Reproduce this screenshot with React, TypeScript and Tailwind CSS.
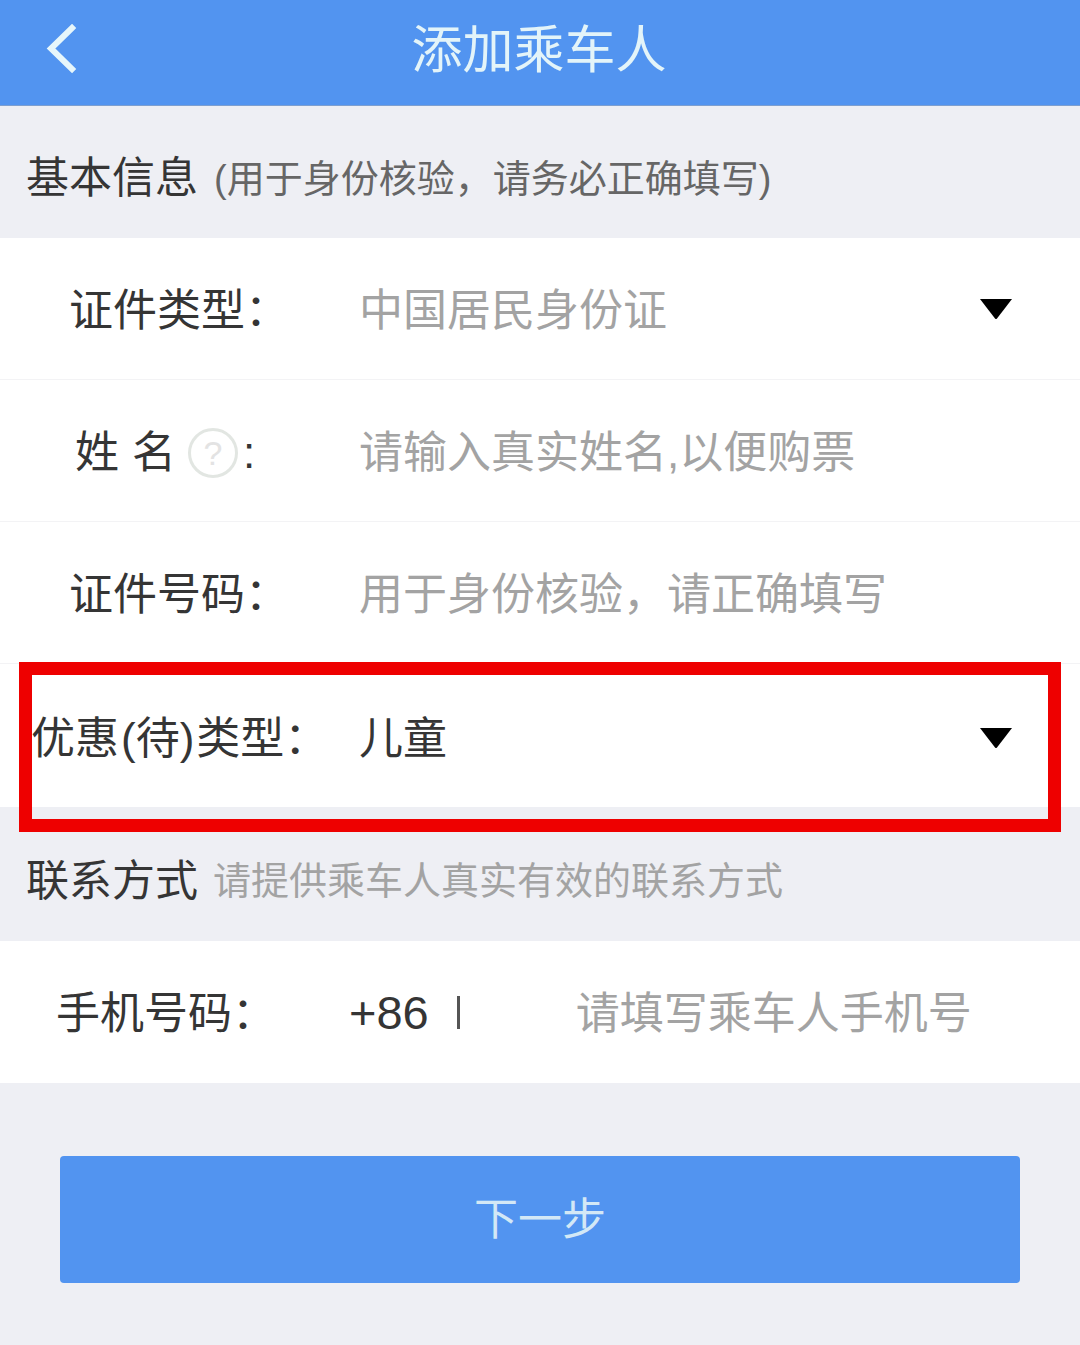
import React from "react";

const FONT = "font-['Liberation_Sans','Noto_Sans_CJK_SC',sans-serif]";

function Caret() {
  return (
    <svg width="32" height="20" viewBox="0 0 32 20" className="block">
      <path d="M0 0H32L17 19.5a1.3 1.3 0 0 1-2 0Z" fill="#000" />
    </svg>
  );
}

function Row({
  label,
  labelClass = "pl-[69px] w-[359px]",
  rowClass = "h-[142px] pt-[4px]",
  value,
  valueClass = "text-[#a3a3a3]",
  caret = false,
  caretClass = "-mt-[10px]",
  divider = true,
  children,
}: {
  label: React.ReactNode;
  labelClass?: string;
  rowClass?: string;
  value?: string;
  valueClass?: string;
  caret?: boolean;
  caretClass?: string;
  divider?: boolean;
  children?: React.ReactNode;
}) {
  return (
    <div
      className={`relative flex items-center bg-white text-[44px] leading-none ${rowClass} ${
        divider ? "border-b border-[#f3f3f5]" : ""
      }`}
    >
      <div className={`shrink-0 whitespace-nowrap text-[#353535] ${labelClass}`}>{label}</div>
      {value && <div className={`whitespace-nowrap ${valueClass}`}>{value}</div>}
      {caret && (
        <div className={`absolute right-[68px] top-1/2 ${caretClass}`}>
          <Caret />
        </div>
      )}
      {children}
    </div>
  );
}

export default function App() {
  return (
    <div className={`h-[1345px] w-[1080px] overflow-hidden bg-[#eeeff4] ${FONT}`}>
      <header className="relative flex h-[106px] items-center justify-center border-b border-[#7d9fd0] bg-[#5294f0] pb-[4px]">
        <svg
          width="34"
          height="50"
          viewBox="0 0 34 50"
          className="absolute left-[45px] top-[24px]"
          fill="none"
          stroke="#e6f6fb"
          strokeWidth="6"
          strokeLinecap="square"
        >
          <path d="M27 4 L6 24.5 L27 45" />
        </svg>
        <h1 className="-ml-[2px] text-[51px] font-normal leading-none text-[#e3f4f9]">添加乘车人</h1>
      </header>

      <section className="flex h-[132px] items-center pl-[26px] pt-[12px]">
        <span className="text-[43px] leading-none text-[#353535]">基本信息</span>
        <span className="ml-[16px] mt-[2px] text-[38px] leading-none text-[#666666]">(用于身份核验，请务必正确填写)</span>
      </section>

      <Row label="证件类型：" value="中国居民身份证" caret />
      <Row
        label={
          <span className="flex items-center">
            <span className="pl-[6px]">姓</span>
            <span className="ml-[13px]">名</span>
            <span className="ml-[12px] flex h-[50px] w-[50px] items-center justify-center rounded-full border-[3px] border-[#e2e6e2] text-[34px] text-[#e3e3e3]">
              ?
            </span>
            <span className="ml-[5px]">:</span>
          </span>
        }
        value="请输入真实姓名,以便购票"
      />
      <Row label="证件号码：" value="用于身份核验，请正确填写" />
      <Row
        label={
          <span>
            优惠<span className="mx-[2px]">(待)</span>类型：
          </span>
        }
        labelClass="pl-[31px] w-[359px]"
        rowClass="h-[143px] pt-[6px]"
        value="儿童"
        valueClass="text-[#353535]"
        caret
        caretClass="-mt-[8px]"
        divider={false}
      >
        <div className="pointer-events-none absolute left-[19px] top-[-2px] h-[170px] w-[1042px] border-[13px] border-[#ee0000]" />
      </Row>

      <section className="flex h-[134px] items-center pl-[26px] pt-[14px]">
        <span className="text-[43px] leading-none text-[#353535]">联系方式</span>
        <span className="ml-[15px] text-[38px] leading-none text-[#a3a3a3]">请提供乘车人真实有效的联系方式</span>
      </section>

      <Row label="手机号码：" labelClass="pl-[56px] w-[349px]" divider={false}>
        <span className="-mt-[4px] text-[47px] text-[#353535]">+86</span>
        <span className="-mt-[4px] ml-[28px] h-[33px] w-[3px] bg-[#555555]" />
        <span className="ml-[116px] text-[#a3a3a3]">请填写乘车人手机号</span>
      </Row>

      <div className="px-[60px] pt-[73px]">
        <button className="flex h-[127px] w-[960px] items-center justify-center rounded-[4px] bg-[#5294f0] text-[44px] text-[#d3e8f6]">
          下一步
        </button>
      </div>
    </div>
  );
}
